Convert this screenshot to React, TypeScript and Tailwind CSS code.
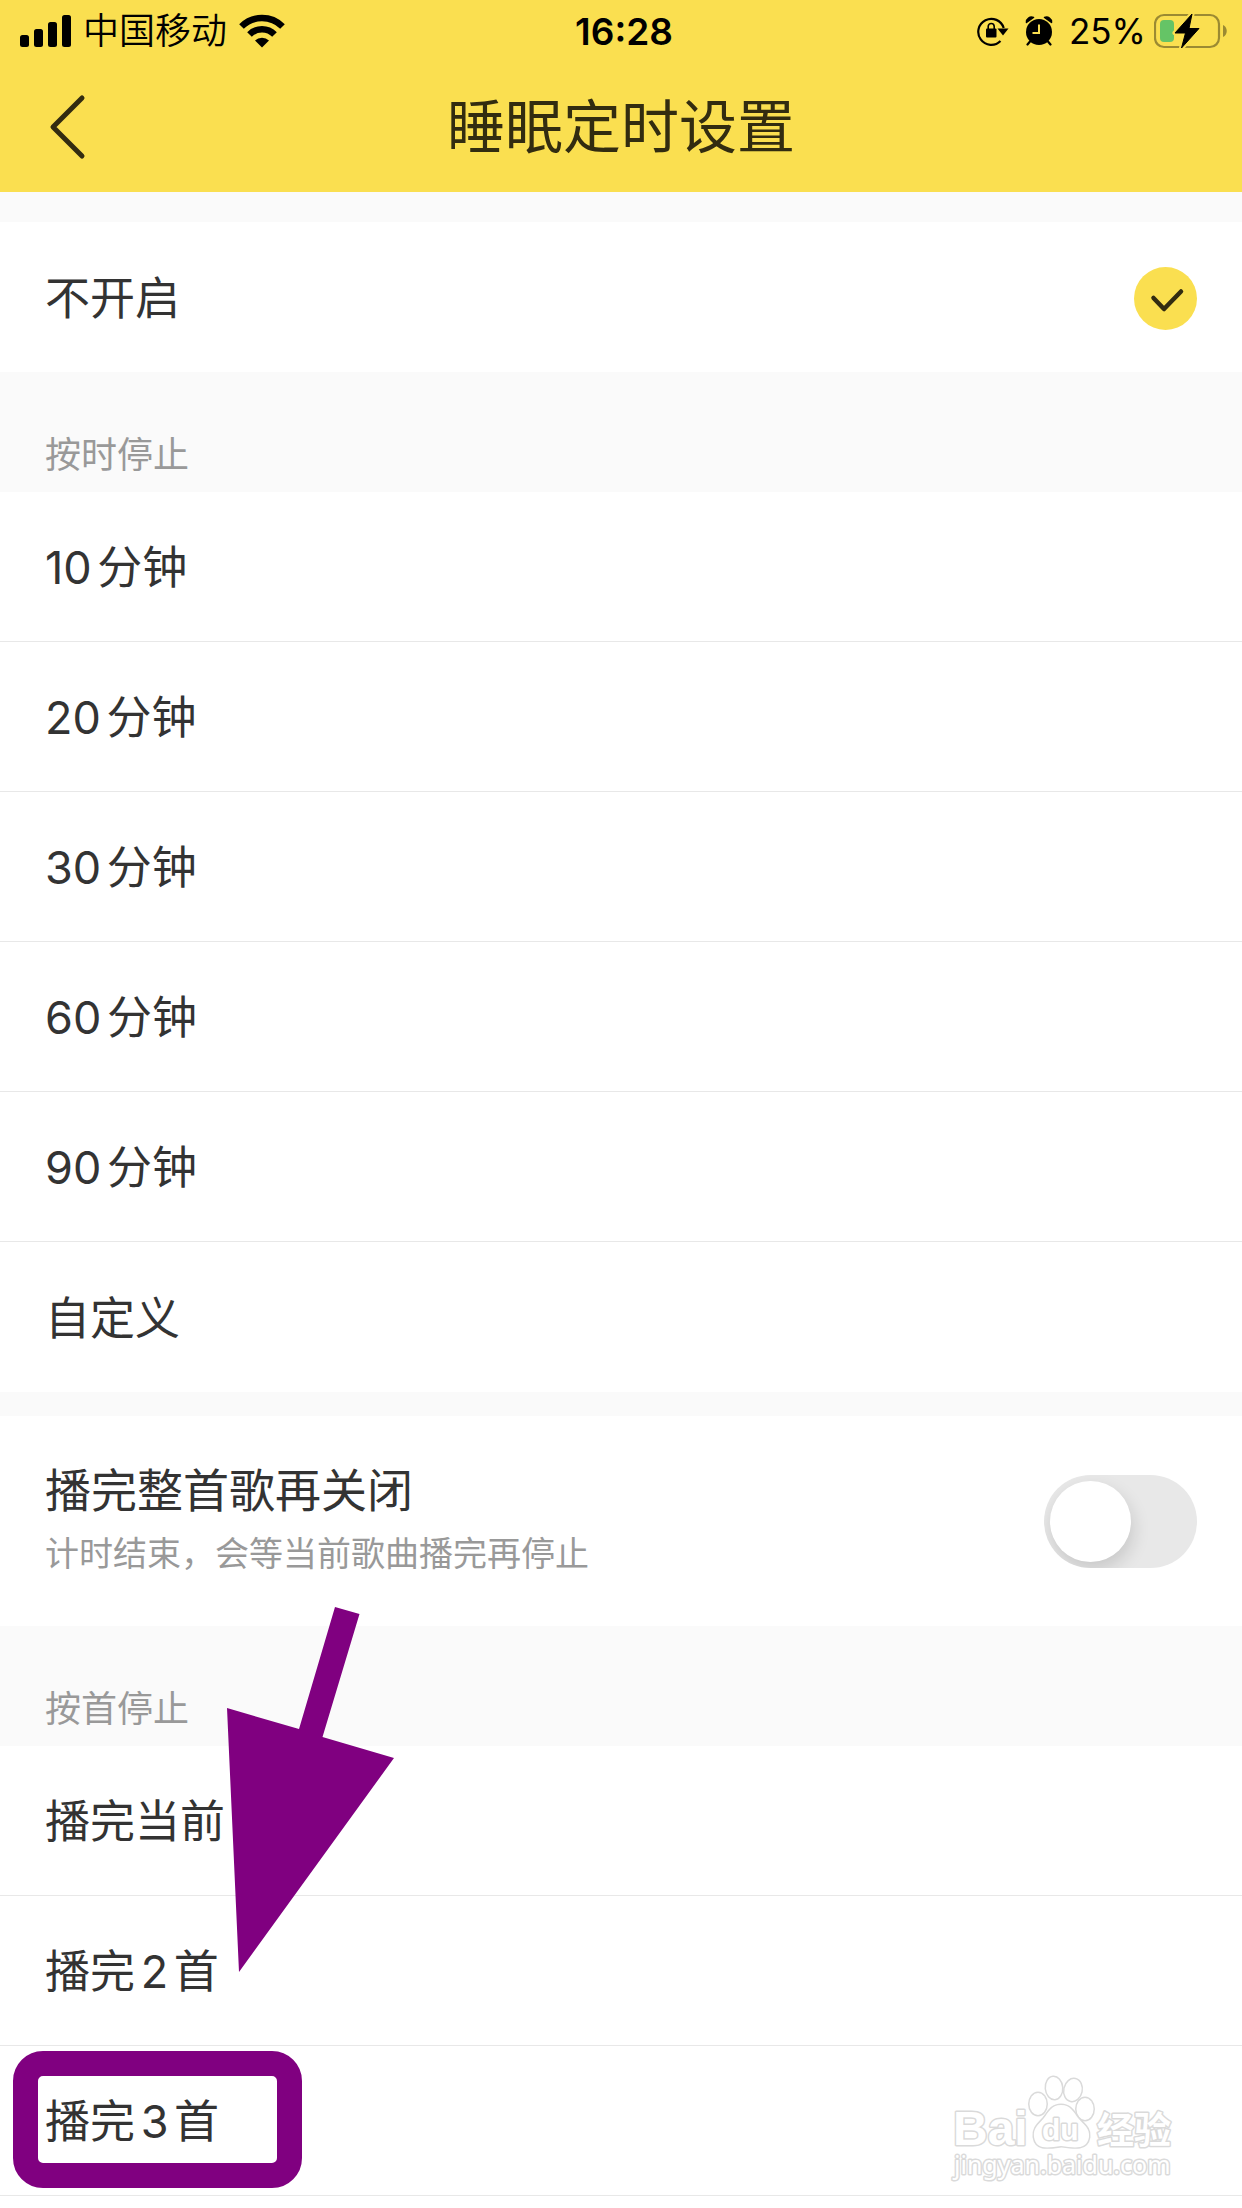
import React, { useState } from 'react';
import clsx from 'clsx';

interface Option {
  id: string;
  label: string;
}

const TIME_OPTIONS: Option[] = [
  { id: '10', label: '10分钟' },
  { id: '20', label: '20分钟' },
  { id: '30', label: '30分钟' },
  { id: '60', label: '60分钟' },
  { id: '90', label: '90分钟' },
  { id: 'custom', label: '自定义' },
];

const SONG_OPTIONS: Option[] = [
  { id: 'song-1', label: '播完当前' },
  { id: 'song-2', label: '播完2首' },
  { id: 'song-3', label: '播完3首' },
];

const SignalIcon = () => (
  <svg className="w-[51px] h-8" viewBox="0 0 51 32">
    <rect x="0" y="20" width="9" height="12" rx="2.5" />
    <rect x="14" y="14" width="9" height="18" rx="2.5" />
    <rect x="28" y="7" width="9" height="25" rx="2.5" />
    <rect x="42" y="0" width="9" height="32" rx="2.5" />
  </svg>
);

const WifiIcon = () => (
  <svg className="w-[46px] h-[34px]" viewBox="0 0 46 34">
    <g fill="none" stroke="#000" strokeWidth="6.5">
      <path d="M2.5 12.5 A29 29 0 0 1 43.5 12.5" />
      <path d="M10.5 20.5 A17.5 17.5 0 0 1 35.5 20.5" />
    </g>
    <path d="M23 33.5 L16 26.5 A10 10 0 0 1 30 26.5 Z" />
  </svg>
);

const RotationLockIcon = () => (
  <svg className="w-8 h-[30px]" viewBox="0 0 32 30">
    <path d="M23.5 25 A13 13 0 1 1 26.7 12" fill="none" stroke="#000" strokeWidth="2.2" />
    <path d="M20.5 12.5 L31.5 12.5 L26 19.5 Z" />
    <rect x="9" y="12.5" width="10.5" height="9" rx="1" />
    <path d="M11.2 13 V10.5 A3 3 0 0 1 17.2 10.5 V13" fill="none" stroke="#000" strokeWidth="1.6" />
  </svg>
);

const AlarmIcon = () => (
  <svg className="w-[28px] h-[30px]" viewBox="0 0 28 30">
    <circle cx="14" cy="16" r="13" />
    <path d="M14 8.5 V17 H7.5" fill="none" stroke="#FADF50" strokeWidth="2" />
    <path d="M1.5 6.5 A5 5 0 0 1 8.5 1.5 Z M19.5 1.5 A5 5 0 0 1 26.5 6.5 Z" stroke="#000" strokeWidth="1.5" strokeLinejoin="round" />
    <path d="M5 25.5 L2.5 28.5 M23 25.5 L25.5 28.5" stroke="#000" strokeWidth="2.2" strokeLinecap="round" />
  </svg>
);

const BatteryIcon = () => (
  <svg className="w-[74px] h-9" viewBox="0 0 74 36">
    <rect x="1" y="2" width="64" height="32" rx="9" fill="none" stroke="#9B8A32" strokeWidth="2.2" />
    <path d="M69 12 C74 14 74 22 69 24 Z" fill="#9B8A32" />
    <rect x="6" y="7" width="14" height="22" rx="4" fill="#65C466" />
    <path
      d="M38 1 L21 20 H31.5 L27.5 35 L45 15.5 H35 Z"
      stroke="#FADF50"
      strokeWidth="5"
      strokeLinejoin="round"
    />
    <path d="M38 1 L21 20 H31.5 L27.5 35 L45 15.5 H35 Z" stroke="#000" strokeLinejoin="round" />
  </svg>
);

const CheckMark = () => (
  <svg className="w-[63px] h-[63px]" viewBox="0 0 63 63">
    <circle cx="31.5" cy="31.5" r="31.5" fill="#FADF50" />
    <path d="M19.5 31 L30 42 L47 24.5" fill="none" stroke="#322C10" strokeWidth="4.5" strokeLinecap="round" strokeLinejoin="round" />
  </svg>
);

const Watermark = () => (
  <svg className="absolute right-[60px] bottom-5 w-[232px] h-[116px]" viewBox="0 0 232 116">
    <g fill="#fff" stroke="#DADADA" strokeWidth="3" strokeLinejoin="round" paintOrder="stroke">
      <text x="3" y="73" className="font-['Liberation_Sans',sans-serif] font-bold text-[48px]">Bai</text>
      <ellipse cx="88" cy="32" rx="8.5" ry="11" />
      <ellipse cx="104" cy="16" rx="8" ry="11" transform="rotate(-5 104 16)" />
      <ellipse cx="123" cy="18" rx="8.5" ry="11" transform="rotate(12 123 18)" />
      <ellipse cx="135" cy="37" rx="8.5" ry="11" />
      <path d="M111 33 C101 33 98 41 94 46 C88 53 83 56 84 65 C86 78 97 76 111 74 C125 76 137 78 139 65 C140 56 134 53 128 46 C124 41 121 33 111 33 Z" />
      <text x="92" y="68" className="font-['Liberation_Sans',sans-serif] font-bold text-[30px]">du</text>
      <text x="147" y="72" className="font-['Noto_Sans_CJK_SC',sans-serif] font-bold text-[37px]">经验</text>
      <text x="4" y="102" className="font-['Noto_Sans',sans-serif] text-[25px]">jingyan.baidu.com</text>
    </g>
  </svg>
);

const SectionTitle: React.FC<{ children: React.ReactNode }> = ({ children }) => (
  <h2 className="h-[120px] px-[45px] pt-12 bg-[#FAFAFA] text-[36px] leading-[70px] font-normal text-[#999999]">
    {children}
  </h2>
);

interface OptionRowProps {
  option: Option;
  checked: boolean;
  divider?: boolean;
  onSelect: (id: string) => void;
}

const OptionRow: React.FC<OptionRowProps> = ({ option, checked, divider, onSelect }) => (
  <label
    className={clsx(
      'relative flex h-[150px] items-center justify-between px-[45px] pt-[3px] bg-white cursor-pointer',
      divider && 'border-b border-[#E8E8E8]',
    )}
  >
    <span>{option.label}</span>
    <input
      type="radio"
      name="sleep-timer"
      className="sr-only"
      checked={checked}
      onChange={() => onSelect(option.id)}
    />
    {checked && <CheckMark />}
  </label>
);

export default function App() {
  const [selected, setSelected] = useState('off');
  const [finishSong, setFinishSong] = useState(false);

  return (
    <div className="relative min-h-screen overflow-hidden bg-white font-[Inter,'Noto_Sans_CJK_SC',sans-serif] text-[45px] text-[#333333] [text-autospace:normal]">
      <header className="h-[192px] bg-[#FADF50]">
        <div className="grid h-[62px] grid-cols-[1fr_auto_1fr] items-center pl-5 pr-[14px] text-[36px] leading-none text-black">
          <div className="flex items-center gap-3">
            <SignalIcon />
            <span className="font-[350]">中国移动</span>
            <WifiIcon />
          </div>
          <span className="text-[37px] font-semibold">16:28</span>
          <div className="flex items-center justify-end gap-2">
            <RotationLockIcon />
            <span className="pl-2"><AlarmIcon /></span>
            <span className="pl-2 text-[35px]">25%</span>
            <BatteryIcon />
          </div>
        </div>
        <div className="grid h-[130px] grid-cols-[1fr_auto_1fr] items-center px-[45px] text-[#322C10]">
          <button type="button" aria-label="返回" className="flex h-24 w-16 items-center">
            <svg className="w-[46px] h-[66px]" viewBox="0 0 46 66" fill="none" stroke="currentColor" strokeWidth="5" strokeLinecap="round" strokeLinejoin="round">
              <path d="M37 4 L8 33 L37 62" />
            </svg>
          </button>
          <h1 className="text-[58px] leading-none font-normal">睡眠定时设置</h1>
        </div>
      </header>

      <main>
        <div className="h-[30px] bg-[#FAFAFA]" />
        <OptionRow option={{ id: 'off', label: '不开启' }} checked={selected === 'off'} onSelect={setSelected} />

        <SectionTitle>按时停止</SectionTitle>
        {TIME_OPTIONS.map((option, i) => (
          <OptionRow
            key={option.id}
            option={option}
            checked={selected === option.id}
            divider={i < TIME_OPTIONS.length - 1}
            onSelect={setSelected}
          />
        ))}

        <div className="h-6 bg-[#FAFAFA]" />
        <label className="relative flex h-[210px] items-center justify-between px-[45px] bg-white cursor-pointer">
          <span className="flex flex-col gap-1 pb-1">
            <span className="text-[46px] leading-[66px]">播完整首歌再关闭</span>
            <span className="text-[34px] leading-[54px] text-[#999999]">计时结束，会等当前歌曲播完再停止</span>
          </span>
          <span className="flex h-[93px] w-[153px] shrink-0 items-center overflow-hidden rounded-full bg-[#E8E8E8] p-1.5 has-checked:justify-end has-checked:bg-[#FADF50]">
            <input
              type="checkbox"
              role="switch"
              className="sr-only"
              checked={finishSong}
              onChange={(e) => setFinishSong(e.target.checked)}
            />
            <span className="size-[81px] rounded-full bg-white shadow-[2px_8px_18px_rgba(0,0,0,0.14)]" />
          </span>
        </label>

        <SectionTitle>按首停止</SectionTitle>
        {SONG_OPTIONS.map((option) => (
          <OptionRow
            key={option.id}
            option={option}
            checked={selected === option.id}
            divider
            onSelect={setSelected}
          />
        ))}
      </main>

      {/* guide marks over the song list */}
      <svg className="absolute left-[227px] top-[1607px] w-[168px] h-[366px] pointer-events-none" viewBox="0 0 168 366" fill="#800080">
        <path d="M108 0 L132.5 7 L95.5 130 L167 151 L12 365 L0 101 L72 122 Z" />
      </svg>
      <div className="absolute left-[13px] top-[2051px] w-[289px] h-[137px] rounded-[30px] border-[25px] border-[#800080] pointer-events-none" />
      <Watermark />
    </div>
  );
}
